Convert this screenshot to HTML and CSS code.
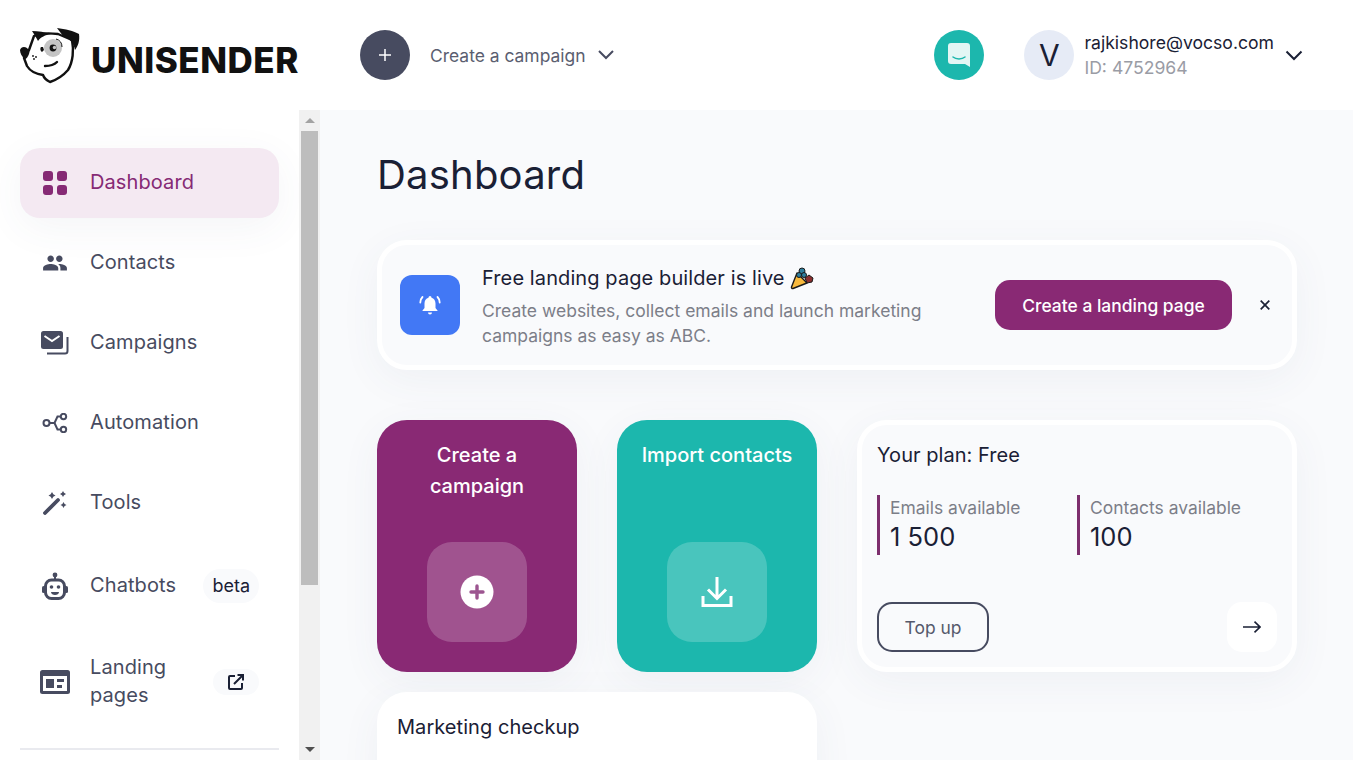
FILE: index.html
```html
<!DOCTYPE html>
<html lang="en">
<head>
    <meta charset="UTF-8">
    <meta name="viewport" content="width=device-width, initial-scale=1.0">
    <title>Unisender - Dashboard</title>
    <link rel="stylesheet" href="styles.css">
</head>
<body>
    <header class="header">
        <a class="logo">
            <svg class="logo-dog" width="60" height="56" viewBox="0 0 60 56">
                <path d="M14 8 C20 5 30 5 38 6 L52 12 C54 22 53 34 48 42 C42 49 36 52 30 54 C26 52 24 50 23 47 C16 46 10 43 7 38 L4 30 L9 22 Z" fill="#fff" stroke="#111" stroke-width="2.400" stroke-linejoin="round"/>
                <path d="M12 3 C18 3 25 4 31 6 C25 7 21 9 18 13 C16 9 14 6 12 3 Z" fill="#111"/>
                <path d="M37 0 C45 1 54 3 59 6 C60 13 58 18 55 22 C54 15 49 10 43 8 C41 5 39 3 37 0 Z" fill="#111"/>
                <circle cx="33" cy="20" r="9" fill="#c4c4c4"/>
                <path d="M36 11 C40 12 42 15 42 19" fill="none" stroke="#111" stroke-width="1"/>
                <circle cx="33" cy="20" r="3.400" fill="#111"/>
                <circle cx="34.500" cy="19.500" r="1.700" fill="#c4c4c4"/>
                <path d="M21 19 C20 20 20 23 22 24 L24 22 L23 19 Z" fill="#111"/>
                <path d="M0 22 C1 19 4 18 7 20 C9 22 10 24 9 26 C8 29 6 31 5 31 C2 29 0 25 0 22 Z" fill="#111"/>
                <circle cx="13" cy="28" r="0.900" fill="#111"/>
                <circle cx="16" cy="29" r="0.900" fill="#111"/>
                <circle cx="14" cy="31" r="0.900" fill="#111"/>
                <path d="M25 38 C30 38 34 37 37 34" fill="none" stroke="#111" stroke-width="2.400" stroke-linecap="round"/>
            </svg>
            <span class="logo-text">UNISENDER</span>
        </a>
        <div class="create-menu">
            <span class="round-btn round-btn-dark">
                <svg width="16" height="16" viewBox="0 0 16 16"><path d="M8 2v12M2 8h12" stroke="#fff" stroke-width="1.500"/></svg>
            </span>
            <span class="create-label">Create a campaign</span>
            <svg width="16" height="10" viewBox="0 0 16 10"><path d="M1 1l7 7 7-7" fill="none" stroke="#474b60" stroke-width="2"/></svg>
        </div>
        <div class="header-right">
            <span class="round-btn round-btn-teal">
                <svg width="22" height="24" viewBox="0 0 22 24">
                    <path d="M3 0h16a3 3 0 0 1 3 3v21l-5-3H3a3 3 0 0 1-3-3V3a3 3 0 0 1 3-3z" fill="#e3f6f4"/>
                    <path d="M5 14c3 2.600 9 2.600 12 0" fill="none" stroke="#1cb7ad" stroke-width="1.500" stroke-linecap="round"/>
                </svg>
            </span>
            <div class="user">
                <span class="avatar">V</span>
                <div class="user-info">
                    <div class="user-email">rajkishore@vocso.com</div>
                    <div class="user-id">ID: 4752964</div>
                </div>
                <svg class="user-chevron" width="18" height="11" viewBox="0 0 18 11"><path d="M1.500 1.500L9 9l7.500-7.500" fill="none" stroke="#1a2035" stroke-width="2"/></svg>
            </div>
        </div>
    </header>

    <div class="layout">
        <aside class="sidebar">
            <nav class="nav">
                <a class="nav-item active">
                    <span class="nav-icon">
                        <svg width="24" height="24" viewBox="0 0 24 24" fill="#862a75">
                            <rect x="0" y="0" width="10" height="10" rx="3"/>
                            <rect x="14" y="0" width="10" height="10" rx="3"/>
                            <rect x="0" y="14" width="10" height="10" rx="3"/>
                            <rect x="14" y="14" width="10" height="10" rx="3"/>
                        </svg>
                    </span>
                    <span class="nav-text">Dashboard</span>
                </a>
                <a class="nav-item">
                    <span class="nav-icon">
                        <svg width="26" height="26" viewBox="0 0 24 24" fill="#474b60"><path d="M16 11c1.660 0 2.990-1.340 2.990-3S17.660 5 16 5c-1.660 0-3 1.340-3 3s1.340 3 3 3zm-8 0c1.660 0 2.990-1.340 2.990-3S9.660 5 8 5C6.340 5 5 6.340 5 8s1.340 3 3 3zm0 2c-2.330 0-7 1.170-7 3.500V19h14v-2.500c0-2.330-4.670-3.500-7-3.500zm8 0c-.290 0-.620.020-.970.050 1.160.840 1.970 1.970 1.970 3.450V19h6v-2.500c0-2.330-4.670-3.500-7-3.500z"/></svg>
                    </span>
                    <span class="nav-text">Contacts</span>
                </a>
                <a class="nav-item">
                    <span class="nav-icon">
                        <svg width="28" height="24" viewBox="0 0 28 24">
                            <rect x="0" y="0" width="22" height="18" rx="2.500" fill="#474b60"/>
                            <path d="M3.500 5l7.500 5 7.500-5" fill="none" stroke="#fff" stroke-width="2"/>
                            <path d="M26.500 6v14a2.500 2.500 0 0 1-2.500 2.500H6" fill="none" stroke="#474b60" stroke-width="2"/>
                        </svg>
                    </span>
                    <span class="nav-text">Campaigns</span>
                </a>
                <a class="nav-item">
                    <span class="nav-icon">
                        <svg width="26" height="20" viewBox="0 0 26 20" fill="none" stroke="#474b60" stroke-width="2">
                            <circle cx="4.500" cy="10" r="3"/>
                            <circle cx="21.500" cy="3.500" r="2.700"/>
                            <circle cx="21.500" cy="16.500" r="2.700"/>
                            <path d="M7.500 10h5l3-6.500h3.500M12.500 10l3 6.500h3.500"/>
                        </svg>
                    </span>
                    <span class="nav-text">Automation</span>
                </a>
                <a class="nav-item">
                    <span class="nav-icon">
                        <svg width="24" height="24" viewBox="0 0 24 24" fill="#474b60">
                            <path d="M2 22L15 9" stroke="#474b60" stroke-width="3.800" stroke-linecap="round"/>
                            <path d="M9 1l1.300 2.200L12.500 4.500 10.300 5.800 9 8 7.700 5.800 5.500 4.500 7.700 3.200z"/>
                            <path d="M20 0l1 1.800L23 3l-2 1.200L20 6l-1-1.800L17 3l2-1.200z"/>
                            <path d="M20.500 11l1.100 1.900 1.900 1.100-1.900 1.100-1.100 1.900-1.100-1.900-1.900-1.100 1.900-1.100z"/>
                        </svg>
                    </span>
                    <span class="nav-text">Tools</span>
                </a>
                <a class="nav-item nav-item-tall">
                    <span class="nav-icon">
                        <svg width="26" height="28" viewBox="0 0 26 28">
                            <circle cx="13" cy="3" r="2.400" fill="#474b60"/>
                            <path d="M13 4v5" stroke="#474b60" stroke-width="2"/>
                            <rect x="3.500" y="8" width="19" height="18.500" rx="6" fill="none" stroke="#474b60" stroke-width="3"/>
                            <rect x="0" y="14" width="3" height="7" rx="1.500" fill="#474b60"/>
                            <rect x="23" y="14" width="3" height="7" rx="1.500" fill="#474b60"/>
                            <circle cx="9.500" cy="15" r="1.800" fill="#474b60"/>
                            <circle cx="16.500" cy="15" r="1.800" fill="#474b60"/>
                            <path d="M9 20h8c0 2-2 3-4 3s-4-1-4-3z" fill="#474b60"/>
                        </svg>
                    </span>
                    <span class="nav-text">Chatbots</span>
                    <span class="nav-badge">beta</span>
                </a>
                <a class="nav-item">
                    <span class="nav-icon">
                        <svg width="30" height="24" viewBox="0 0 30 24">
                            <rect x="0" y="0" width="30" height="24" rx="2.500" fill="#474b60"/>
                            <rect x="3" y="6" width="24" height="15" fill="#fff"/>
                            <rect x="6" y="9" width="8" height="9" fill="#474b60"/>
                            <rect x="17" y="9" width="7" height="3" fill="#474b60"/>
                            <rect x="17" y="15" width="5" height="3" fill="#474b60"/>
                        </svg>
                    </span>
                    <span class="nav-text nav-text-wrap">Landing pages</span>
                    <span class="nav-ext">
                        <svg width="16" height="16" viewBox="0 0 16 16" fill="none" stroke="#1a2035" stroke-width="2">
                            <path d="M7 2H2a1 1 0 0 0-1 1v11a1 1 0 0 0 1 1h11a1 1 0 0 0 1-1V9"/>
                            <path d="M6 10l9-9M9.500 1H15v5.500"/>
                        </svg>
                    </span>
                </a>
                <div class="nav-divider"></div>
            </nav>
            <div class="scrollbar">
                <div class="scroll-btn"><span class="arrow-up"></span></div>
                <div class="scroll-thumb"></div>
                <div class="scroll-rest"></div>
                <div class="scroll-btn"><span class="arrow-down"></span></div>
            </div>
        </aside>

        <main class="main">
            <h1 class="page-title">Dashboard</h1>

            <section class="banner">
                <span class="banner-icon">
                    <svg width="24" height="24" viewBox="0 0 24 24" fill="#fff">
                        <path d="M12 3a1.500 1.500 0 0 1 1.500 1.500v.300C16 5.500 17.500 7.700 17.500 10.500V15l2 2.500v.500h-15v-.500L6.500 15v-4.500C6.500 7.700 8 5.500 10.500 4.800v-.300A1.500 1.500 0 0 1 12 3z"/>
                        <path d="M10 19.500h4a2 2 0 0 1-4 0z"/>
                        <path d="M4.500 4C3 5.500 2.300 7.500 2.300 9.500M19.500 4c1.500 1.500 2.200 3.500 2.200 5.500" fill="none" stroke="#fff" stroke-width="1.800" stroke-linecap="round"/>
                    </svg>
                </span>
                <div class="banner-body">
                    <div class="banner-title">
                        Free landing page builder is live
                        <svg class="banner-emoji" width="24" height="24" viewBox="0 0 24 24">
                            <path d="M7 7L1.500 21c-.300 1 .500 1.800 1.500 1.500L17 17z" fill="#f8b93c" stroke="#1a1a1a" stroke-width="1.400" stroke-linejoin="round"/>
                            <circle cx="12" cy="5" r="3" fill="#2f7f9e" stroke="#1a1a1a"/>
                            <circle cx="9" cy="9" r="2.500" fill="#2f7f9e" stroke="#1a1a1a"/>
                            <circle cx="14" cy="9" r="2.500" fill="#2f7f9e" stroke="#1a1a1a"/>
                            <path d="M15 12l4-3 4 3-1 4-5 1z" fill="#8c2f2f" stroke="#1a1a1a"/>
                        </svg>
                    </div>
                    <p class="banner-text">Create websites, collect emails and launch marketing campaigns as easy as ABC.</p>
                </div>
                <a class="btn-primary">Create a landing page</a>
                <span class="banner-close">
                    <svg width="10" height="10" viewBox="0 0 10 10"><path d="M.7.700l8.600 8.600M9.300.700L.7 9.300" stroke="#1a2035" stroke-width="1.700"/></svg>
                </span>
            </section>

            <section class="cards">
                <a class="action-card action-purple">
                    <div class="action-title">Create a campaign</div>
                    <span class="action-icon">
                        <svg width="34" height="34" viewBox="0 0 34 34">
                            <circle cx="17" cy="17" r="16.500" fill="#fff"/>
                            <path d="M17 11v12M11 17h12" stroke="#9c5590" stroke-width="3.400" stroke-linecap="round"/>
                        </svg>
                    </span>
                </a>
                <a class="action-card action-teal">
                    <div class="action-title">Import contacts</div>
                    <span class="action-icon">
                        <svg width="32" height="32" viewBox="0 0 32 32" fill="none" stroke="#fff" stroke-width="3">
                            <path d="M16 1v21M7 13.500l9 9 9-9"/>
                            <path d="M2 20v9.500h28V20"/>
                        </svg>
                    </span>
                </a>
                <div class="plan-card">
                    <div class="card-title">Your plan: Free</div>
                    <div class="plan-stats">
                        <div class="plan-stat">
                            <div class="stat-label">Emails available</div>
                            <div class="stat-value">1 500</div>
                        </div>
                        <div class="plan-stat">
                            <div class="stat-label">Contacts available</div>
                            <div class="stat-value">100</div>
                        </div>
                    </div>
                    <div class="plan-actions">
                        <a class="btn-outline">Top up</a>
                        <span class="btn-arrow">
                            <svg width="18" height="12" viewBox="0 0 18 12" fill="none" stroke="#1a2035" stroke-width="1.600"><path d="M0 6h17M11.500.700L17 6l-5.500 5.300"/></svg>
                        </span>
                    </div>
                </div>
                <div class="checkup-card">
                    <div class="card-title">Marketing checkup</div>
                </div>
            </section>
        </main>
    </div>
</body>
</html>
```

FILE: styles.css
```css
:root {
    --purple: #892974;
    --teal: #1cb7ad;
    --dark: #474b60;
    --ink: #1a2035;
    --grey: #7c7e88;
    --background-color: #f9fafc;
    --box-shadow: 0 10px 40px rgba(70, 80, 120, 0.06);
}

* {
    box-sizing: border-box;
}

body {
    font-family: 'Inter', 'Liberation Sans', sans-serif;
    margin: 0;
    height: 100vh;
    overflow: hidden;
    background: white;
    color: var(--ink);
    display: flex;
    flex-direction: column;
}

/* header */
.header {
    height: 110px;
    flex: none;
    display: flex;
    align-items: center;
    padding: 0 50px 0 20px;
}

.logo {
    width: 340px;
    flex: none;
    display: flex;
    align-items: center;
    gap: 12px;
}

.logo-dog {
    margin-top: 1px;
}

.logo-text {
    font-size: 35px;
    font-weight: 800;
    line-height: 40px;
    letter-spacing: 0.5px;
    color: #111;
    margin-top: 10px;
    margin-left: -1px;
}

.create-menu {
    display: flex;
    align-items: center;
}

.round-btn {
    width: 50px;
    height: 50px;
    border-radius: 50%;
    flex: none;
    display: flex;
    align-items: center;
    justify-content: center;
}

.round-btn-dark {
    background: var(--dark);
}

.round-btn-teal {
    background: var(--teal);
}

.create-label {
    font-size: 17.45px;
    color: #5a5e70;
    margin: 0 12px 0 20px;
}

.header-right {
    margin-left: auto;
    display: flex;
    align-items: center;
    gap: 40px;
}

.user {
    display: flex;
    align-items: center;
}

.avatar {
    width: 50px;
    height: 50px;
    border-radius: 50%;
    background: #e6ebf6;
    display: flex;
    align-items: center;
    justify-content: center;
    font-size: 30px;
    margin-right: 10px;
}

.user-email {
    font-size: 17.6px;
    line-height: 24px;
}

.user-id {
    font-size: 17.6px;
    line-height: 24px;
    margin-top: 1px;
    color: #9a9ca5;
}

.user-chevron {
    margin-left: 11px;
}

/* sidebar */
.layout {
    flex: 1;
    min-height: 0;
    display: flex;
}

.sidebar {
    width: 320px;
    flex: none;
    display: flex;
}

.nav {
    width: 299px;
    padding: 38px 20px 0;
    display: flex;
    flex-direction: column;
    gap: 10px;
    overflow: hidden;
}

.nav-item {
    display: flex;
    align-items: center;
    flex: none;
    padding: 20px;
    min-height: 70px;
    border-radius: 20px;
    font-size: 20px;
    line-height: 28px;
    color: var(--dark);
}

.nav-item-tall {
    min-height: 76px;
}

.nav-item.active {
    background: #f4e9f2;
    color: #862a75;
    box-shadow: var(--box-shadow);
}

.nav-icon {
    width: 30px;
    flex: none;
    margin-right: 20px;
    display: flex;
    align-items: center;
    justify-content: center;
}

.nav-text {
    letter-spacing: 0.1px;
    margin: -1px 0 1px;
}

.nav-text-wrap {
    width: 100px;
}

.nav-badge {
    margin-left: auto;
    height: 34px;
    padding: 0 9px;
    border-radius: 17px;
    background: var(--background-color);
    font-size: 18px;
    line-height: 34px;
    color: var(--ink);
}

.nav-ext {
    margin-left: auto;
    width: 46px;
    height: 26px;
    border-radius: 13px;
    background: var(--background-color);
    display: flex;
    align-items: center;
    justify-content: center;
}

.nav-divider {
    flex: none;
    height: 2px;
    margin-top: 8px;
    background: #e9eaef;
}

.scrollbar {
    width: 21px;
    flex: none;
    padding: 0 2px;
    background: #f1f1f1;
    display: flex;
    flex-direction: column;
}

.scroll-btn {
    height: 21px;
    flex: none;
    display: flex;
    align-items: center;
    justify-content: center;
}

.arrow-up {
    border: 5px solid transparent;
    border-top: 0;
    border-bottom: 5px solid #a3a3a3;
}

.arrow-down {
    border: 5px solid transparent;
    border-bottom: 0;
    border-top: 5px solid #505050;
}

.scroll-thumb {
    height: 454px;
    flex: none;
    background: #bdbdbd;
}

.scroll-rest {
    flex: 1;
}

/* main */
.main {
    flex: 1;
    min-width: 0;
    background: var(--background-color);
    padding: 40px 56px 0 57px;
    overflow: hidden;
}

.page-title {
    margin: 0 0 40px;
    font-size: 40px;
    font-weight: 400;
    line-height: 50px;
    letter-spacing: 0.2px;
}

.banner {
    height: 130px;
    display: flex;
    align-items: center;
    border: 5px solid white;
    border-radius: 30px;
    padding: 0 22px 0 18px;
    background: var(--background-color);
    box-shadow: var(--box-shadow);
    margin-bottom: 50px;
}

.banner-icon {
    width: 60px;
    height: 60px;
    flex: none;
    border-radius: 12px;
    background: #4278f5;
    display: flex;
    align-items: center;
    justify-content: center;
    margin-right: 22px;
}

.banner-body {
    flex: 1;
    min-width: 0;
    margin-right: 35px;
    padding-top: 2px;
}

.banner-title {
    font-size: 20px;
    line-height: 28px;
    letter-spacing: 0.1px;
    display: flex;
    align-items: center;
    gap: 5px;
    margin-bottom: 6px;
}

.banner-text {
    margin: 0;
    font-size: 17.5px;
    line-height: 25px;
    color: var(--grey);
}

.btn-primary {
    width: 237px;
    height: 50px;
    flex: none;
    border-radius: 15px;
    background: var(--purple);
    color: white;
    font-size: 17.45px;
    font-weight: 500;
    display: flex;
    align-items: center;
    justify-content: center;
}

.banner-close {
    margin-left: 28px;
    display: flex;
}

.cards {
    display: grid;
    grid-template-columns: 200px 200px 440px;
    column-gap: 40px;
    row-gap: 20px;
}

.action-card {
    height: 252px;
    border-radius: 30px;
    padding: 20px 20px 30px;
    display: flex;
    flex-direction: column;
    align-items: center;
    justify-content: space-between;
    color: white;
    box-shadow: var(--box-shadow);
}

.action-purple {
    background: var(--purple);
}

.action-teal {
    background: var(--teal);
}

.action-title {
    font-size: 20px;
    font-weight: 500;
    line-height: 31px;
    text-align: center;
}

.action-icon {
    width: 100px;
    height: 100px;
    border-radius: 25px;
    background: rgba(255, 255, 255, 0.2);
    display: flex;
    align-items: center;
    justify-content: center;
}

.plan-card {
    height: 252px;
    border: 5px solid white;
    border-radius: 30px;
    padding: 15px 15px 15px;
    background: var(--background-color);
    box-shadow: var(--box-shadow);
    display: flex;
    flex-direction: column;
}

.card-title {
    font-size: 20px;
    line-height: 31px;
    letter-spacing: 0.05px;
}

.plan-stats {
    display: flex;
    margin-top: 24px;
}

.plan-stat {
    width: 200px;
    height: 60px;
    border-left: 3px solid #7d2e6d;
    padding-left: 10px;
}

.stat-label {
    font-size: 17.45px;
    line-height: 26px;
    color: var(--grey);
}

.stat-value {
    font-size: 25.5px;
    line-height: 32px;
}

.plan-actions {
    margin-top: auto;
    display: flex;
    align-items: center;
    justify-content: space-between;
}

.btn-outline {
    width: 112px;
    height: 50px;
    border: 2px solid var(--dark);
    border-radius: 15px;
    font-size: 17.45px;
    color: #55596b;
    display: flex;
    align-items: center;
    justify-content: center;
}

.btn-arrow {
    width: 50px;
    height: 50px;
    border-radius: 15px;
    background: white;
    display: flex;
    align-items: center;
    justify-content: center;
}

.checkup-card {
    grid-column: 1 / 3;
    height: 300px;
    border-radius: 30px;
    background: white;
    padding: 20px;
    box-shadow: var(--box-shadow);
}
```
